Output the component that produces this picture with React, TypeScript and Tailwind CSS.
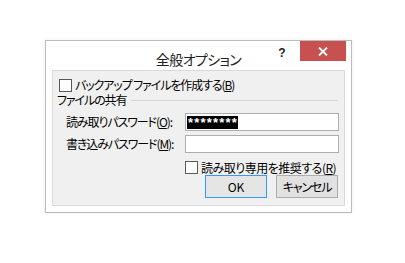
import React from 'react'

const jp = "font-['Noto_Sans_CJK_JP','Noto_Sans',sans-serif] [font-feature-settings:'palt']"

function CheckBox() {
  return <div className="w-[13px] h-[13px] border border-[#5a5a5a] bg-white shrink-0" />
}

function Accel({ k }: { k: string }) {
  return (
    <span>
      (<span className="underline underline-offset-1">{k}</span>)
    </span>
  )
}

export default function App() {
  return (
    <div className={`w-[405px] h-[263px] bg-white pt-[40px] pl-[45px] ${jp}`}>
      <div className="w-[307px] h-[173px] border border-[#bcbcbc] bg-white flex flex-col shadow-[0_0_4px_rgba(0,0,0,0.08)]">
        {/* タイトルバー */}
        <div className="h-[29px] grid grid-cols-[1fr_auto_1fr]">
          <div />
          <div className="text-[14px] text-[#222] leading-none pt-[11px] tracking-[-0.6px] whitespace-nowrap">全般オプション</div>
          <div className="flex justify-end items-start">
            <div className="w-[20px] h-[20px] flex items-center justify-center text-[12px] font-bold text-[#222] font-['Liberation_Sans',sans-serif] mr-[8px] pt-[3px]">
              ?
            </div>
            <div className="w-[46px] h-[20px] bg-[#c75050] flex items-center justify-center mr-[5px]">
              <svg width="10" height="9" viewBox="0 0 10 9">
                <path d="M1 0.5 L9 8.5 M9 0.5 L1 8.5" stroke="white" strokeWidth="1.8" />
              </svg>
            </div>
          </div>
        </div>

        {/* 本体 */}
        <div className="mx-[6px] mb-[6px] flex-1 border border-[#d9d9d9] bg-[#f0f0f0] px-[4px] flex flex-col text-[12px] tracking-[-1.1px] text-black leading-none whitespace-nowrap">
          <div className="mt-[7px] h-[14px] pl-[2px] flex items-center gap-[3px]">
            <CheckBox />
            <span>バックアップ ファイルを作成する<Accel k="B" /></span>
          </div>

          <div className="mt-[1px] h-[14px] flex items-center">
            <span>ファイルの共有</span>
            <div className="flex-1 h-px bg-[#d5d5d5] ml-[5px] mr-[2px]" />
          </div>

          <div className="mt-[6px] flex items-center">
            <div className="w-[128px] pl-[9px]">読み取りパスワード<Accel k="O" />:</div>
            <div className="flex-1 h-[18px] border border-[#abadb3] bg-white mr-[1px] flex items-center pl-[1px]">
              <span className="bg-black text-white font-bold font-['Liberation_Sans',sans-serif] text-[13px] leading-[13px] pl-[1px] tracking-[1.2px]">
                ********
              </span>
            </div>
          </div>

          <div className="mt-[4px] flex items-center">
            <div className="w-[128px] pl-[9px]">書き込みパスワード<Accel k="M" />:</div>
            <div className="flex-1 h-[18px] border border-[#abadb3] bg-white mr-[1px]" />
          </div>

          <div className="mt-[8px] h-[13px] pl-[128px] flex items-center gap-[3px]">
            <CheckBox />
            <span className="tracking-[-0.5px]">読み取り専用を推奨する<Accel k="R" /></span>
          </div>

          <div className="mt-[1px] flex justify-end gap-[9px] mr-[2px]">
            <button className="w-[62px] h-[23px] border border-[#3399ff] bg-[#e5e5e5] text-[12px] text-black tracking-normal">OK</button>
            <button className="w-[62px] h-[23px] border border-[#adadad] bg-[#e1e1e1] text-[12px] text-black">キャンセル</button>
          </div>
        </div>
      </div>
    </div>
  )
}
